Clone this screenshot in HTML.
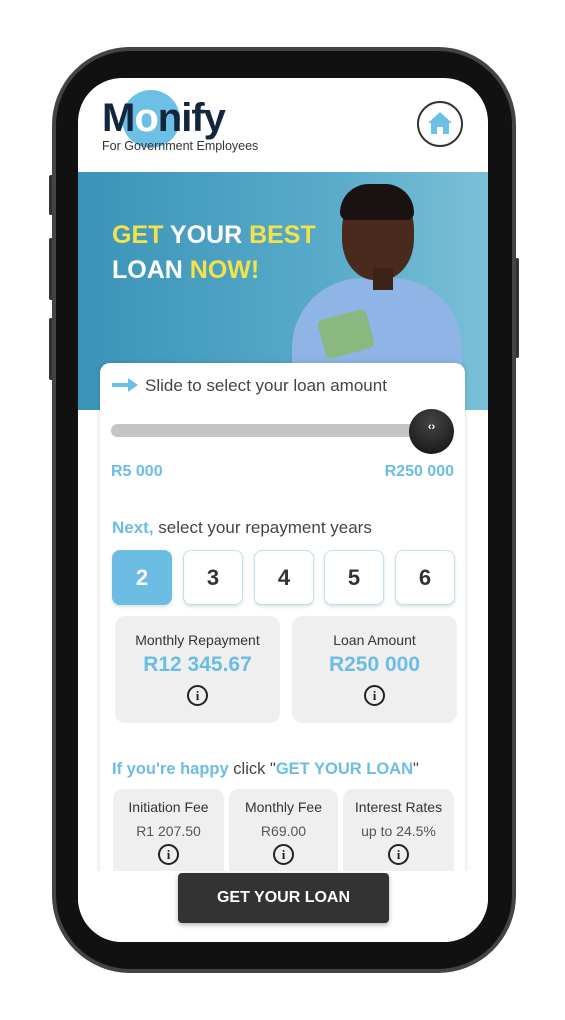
<!DOCTYPE html>
<html><head><style>
*{margin:0;padding:0;box-sizing:border-box}
body{width:565px;height:1020px;background:#fff;position:relative;overflow:hidden;font-family:"Liberation Sans",sans-serif}
.a{position:absolute}
.phone{left:52px;top:47px;width:464px;height:926px;border-radius:78px;background:#111;border:4px solid #444}
.scr{left:78px;top:78px;width:410px;height:864px;border-radius:44px;background:#fff;overflow:hidden}
.yr{position:absolute;top:472px;width:60px;height:55px;border:1.5px solid #bfe0ee;border-radius:8px;background:#fff;box-shadow:0 2px 3px rgba(0,0,0,.12);text-align:center;line-height:54px;font-size:22px;font-weight:bold;color:#333}
.sum{position:absolute;top:538px;height:107px;background:#efefef;border-radius:10px;text-align:center;color:#333}
.fee{position:absolute;top:711px;height:90px;background:#efefef;border-radius:10px;text-align:center;color:#333}
.i{display:inline-block;width:21px;height:21px;border:2px solid #222;border-radius:50%;font-size:13px;font-weight:bold;line-height:17px;font-family:"Liberation Serif",serif;color:#222}
.blue{color:#6bbde3}
</style></head><body>
<div class="a" style="left:49px;top:175px;width:5px;height:40px;background:#333;border-radius:2px"></div>
<div class="a" style="left:49px;top:238px;width:5px;height:62px;background:#333;border-radius:2px"></div>
<div class="a" style="left:49px;top:318px;width:5px;height:62px;background:#333;border-radius:2px"></div>
<div class="a" style="left:514px;top:258px;width:5px;height:100px;background:#333;border-radius:2px"></div>
<div class="a phone"></div>
<div class="a scr">
 <div class="a" style="left:44px;top:12px;width:58px;height:58px;border-radius:50%;background:#6cc0e5"></div>
 <div class="a" style="left:24px;top:18px;font-size:40px;font-weight:bold;color:#13263d;letter-spacing:-1px">M<span style="color:#fff">o</span>nify</div>
 <div class="a" style="left:24px;top:61px;font-size:12.5px;color:#333">For Government Employees</div>
 <div class="a" style="left:339px;top:23px;width:46px;height:46px;border-radius:50%;border:2.5px solid #333"></div>
 <svg class="a" style="left:349px;top:33px" width="26" height="24" viewBox="0 0 26 24"><path d="M13 1 L25 12 L22 12 L22 23 L16 23 L16 16 L10 16 L10 23 L4 23 L4 12 L1 12 Z" fill="#6cc0e5"/></svg>
 <div class="a" style="left:0;top:94px;width:410px;height:238px;background:linear-gradient(90deg,#3a94b8,#58aac9 60%,#7ac0d8)"></div>
 <div class="a" style="left:34px;top:140px;font-size:25px;font-weight:bold;color:#fff;line-height:35px"><span style="color:#f3e24a">GET</span> YOUR <span style="color:#f3e24a">BEST</span><br>LOAN <span style="color:#f3e24a">NOW!</span></div>
 <div class="a" style="left:214px;top:200px;width:170px;height:140px;border-radius:70px 70px 0 0;background:#8fb4e6"></div>
 <div class="a" style="left:264px;top:110px;width:72px;height:92px;border-radius:45%;background:#4a2a1c"></div>
 <div class="a" style="left:262px;top:106px;width:74px;height:36px;border-radius:40px 40px 10px 10px;background:#1a1210"></div>
 <div class="a" style="left:295px;top:190px;width:20px;height:22px;background:#3d2216"></div>
 <div class="a" style="left:243px;top:236px;width:50px;height:40px;background:#8bb880;border-radius:6px;transform:rotate(-15deg)"></div>
 <div class="a" style="left:22px;top:285px;width:365px;height:620px;background:#fff;border-radius:10px;box-shadow:0 0 6px rgba(0,0,0,.15)"></div>
 <svg class="a" style="left:34px;top:300px" width="26" height="14"><path d="M0 5h16V0l10 7-10 7V9H0z" fill="#6cc0e5"/></svg>
 <div class="a" style="left:67px;top:298px;font-size:17px;color:#444">Slide to select your loan amount</div>
 <div class="a" style="left:33px;top:346px;width:320px;height:13px;border-radius:7px;background:#c4c4c4"></div>
 <div class="a" style="left:331px;top:331px;width:45px;height:45px;border-radius:50%;background:radial-gradient(circle at 50% 30%,#444,#111)"></div>
 <div class="a" style="left:331px;top:343px;width:45px;text-align:center;color:#fff;font-size:11px;font-weight:bold">‹›</div>
 <div class="a blue" style="left:33px;top:385px;font-size:16px;font-weight:bold">R5 000</div>
 <div class="a blue" style="right:34px;top:385px;font-size:16px;font-weight:bold">R250 000</div>
 <div class="a" style="left:34px;top:440px;font-size:17px;color:#444"><b class="blue">Next,</b> select your repayment years</div>
 <div class="yr" style="left:34px;background:#6cbde3;border-color:#6cbde3;color:#fff">2</div>
 <div class="yr" style="left:105px">3</div>
 <div class="yr" style="left:176px">4</div>
 <div class="yr" style="left:246px">5</div>
 <div class="yr" style="left:317px">6</div>
 <div class="sum" style="left:37px;width:165px"><div style="margin-top:16px;font-size:14px">Monthly Repayment</div><div class="blue" style="font-size:21px;font-weight:bold;margin-top:5px">R12 345.67</div><div class="i" style="margin-top:8px">i</div></div>
 <div class="sum" style="left:214px;width:165px"><div style="margin-top:16px;font-size:14px">Loan Amount</div><div class="blue" style="font-size:21px;font-weight:bold;margin-top:5px">R250 000</div><div class="i" style="margin-top:8px">i</div></div>
 <div class="a" style="left:34px;top:682px;font-size:16.5px;color:#444"><b class="blue">If you're happy</b> click "<b class="blue">GET YOUR LOAN</b>"</div>
 <div class="fee" style="left:35px;width:111px"><div style="margin-top:10px;font-size:14px">Initiation Fee</div><div style="font-size:14px;margin-top:8px;color:#555">R1 207.50</div><div class="i" style="margin-top:5px">i</div></div>
 <div class="fee" style="left:151px;width:109px"><div style="margin-top:10px;font-size:14px">Monthly Fee</div><div style="font-size:14px;margin-top:8px;color:#555">R69.00</div><div class="i" style="margin-top:5px">i</div></div>
 <div class="fee" style="left:265px;width:111px"><div style="margin-top:10px;font-size:14px">Interest Rates</div><div style="font-size:14px;margin-top:8px;color:#555">up to 24.5%</div><div class="i" style="margin-top:5px">i</div></div>
 <div class="a" style="left:0;top:793px;width:410px;height:80px;background:#fff"></div>
 <div class="a" style="left:100px;top:795px;width:211px;height:50px;background:#333;border-radius:4px;box-shadow:0 2px 5px rgba(0,0,0,.3);color:#fff;font-weight:bold;font-size:16px;text-align:center;line-height:50px">GET YOUR LOAN</div>
</div>
</body></html>
